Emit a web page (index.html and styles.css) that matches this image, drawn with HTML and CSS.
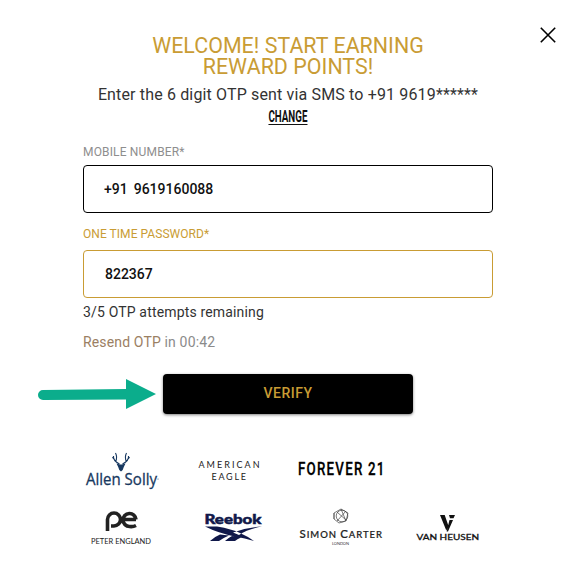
FILE: index.html
```html
<!DOCTYPE html>
<html lang="en">
<head>
<meta charset="utf-8">
<title>Verify OTP</title>
<link rel="stylesheet" href="styles.css">
</head>
<body>
<main class="dialog">
  <button class="close" aria-label="Close"><svg width="16" height="16" viewBox="0 0 16 16"><path d="M.8.8 15.2 15.2M15.2.8.8 15.2" stroke="#000" stroke-width="1.6" fill="none"/></svg></button>
  <h1 class="title">WELCOME! START EARNING<br>REWARD POINTS!</h1>
  <p class="subtitle">Enter the 6 digit OTP sent via SMS to +91 9619******</p>
  <a class="change">CHANGE</a>
  <form class="form">
    <label class="label">MOBILE NUMBER*</label>
    <div class="field"><span class="prefix">+91</span><span class="number">9619160088</span></div>
    <label class="label label-active">ONE TIME PASSWORD*</label>
    <div class="field field-active"><span class="otp">822367</span></div>
    <p class="attempts">3/5 OTP attempts remaining</p>
    <p class="resend"><span class="resend-link">Resend OTP</span> in 00:42</p>
  </form>
  <div class="action">
    <svg class="arrow" width="125" height="40" viewBox="34 374 125 40"><path d="M43 390 126 389V379L156 394 126 409V399.500L43 400A5 5 0 0 1 43 390Z" fill="#0bad8c"/></svg>
    <button class="verify">VERIFY</button>
  </div>
  <div class="brands">
    <svg viewBox="67 445 109 50">
      <g fill="none" stroke="#173860" stroke-width="1.1">
        <path d="M119.500 464C115.500 462 113 460 113.500 456M115.500 461.500C117 459 117 456 115.500 453M113.700 459 112.500 457M122.500 464C126.500 462 129 460 128.500 456M126.500 461.500C125 459 125 456 126.500 453M128.300 459 129.500 457"/>
      </g>
      <path d="M116.500 463.500 120 464.500H122L125.500 463.500 123.800 467 122.700 470 121 471.500 119.300 470 118.200 467Z" fill="#173860"/>
      <text x="86" y="485" textLength="71" lengthAdjust="spacingAndGlyphs" class="t-allen">Allen Solly</text>
      <circle cx="158" cy="479" r=".5" fill="#173860"/>
    </svg>
    <svg viewBox="176 445 109 50">
      <text x="198.500" y="467.500" textLength="61" class="t-eagle">AMERICAN</text>
      <text x="211.500" y="479.800" textLength="34.500" class="t-eagle">EAGLE</text>
    </svg>
    <svg viewBox="285 445 109 50">
      <text transform="translate(298 475) scale(.72 1)" textLength="120" class="t-forever">FOREVER 21</text>
    </svg>
    <span></span>
    <svg viewBox="67 503 109 50">
      <g fill="none" stroke="#222" stroke-width="3.600">
        <path d="M107.500 531V519.500A6.500 6.500 0 1 1 114 526H111M136 519.500H124.500M136 519.500A6.500 6.500 0 1 0 129.500 526.500Q133 527 136 525.500"/>
      </g>
      <text x="91" y="543.500" textLength="60" lengthAdjust="spacingAndGlyphs" class="t-peter">PETER ENGLAND</text>
    </svg>
    <svg viewBox="176 503 109 50">
      <text x="204.500" y="523.500" textLength="57" lengthAdjust="spacingAndGlyphs" class="t-reebok">Reebok</text>
      <path d="M205 526.500H217Q232 529 240 533Q247 536 254 541Q245 538 235 536.500Q218 533 205 526.500ZM262 526.500Q247 527 233 532.500L239 535Q248 529 262 526.500ZM220 534.500 229 535.500Q223 538 219 541H210Q214 537 220 534.500ZM232 536 241 537.500Q237 539 235 541H225Q228 538 232 536Z" fill="#10184a"/>
    </svg>
    <svg viewBox="285 503 109 50">
      <g fill="none" stroke="#444" stroke-width=".7"><circle cx="342" cy="516" r="5.800"/><path d="M334 513 341 509 348 513 346 521 339 523 334 519ZM337 512 346 520M346 511 337 521M334 513V519M341 509 346 521"/></g>
      <text x="299.500" y="538" textLength="82.500" class="t-simon"><tspan>S</tspan><tspan class="small">IMON </tspan><tspan>C</tspan><tspan class="small">ARTER</tspan></text>
      <text x="332" y="545.300" textLength="17" class="t-london">LONDON</text>
    </svg>
    <svg viewBox="394 503 109 50">
      <path d="M440 515H444.700L448.500 526 446.300 530.500ZM449 515H455L453.500 518.300H450ZM449.500 520H453L448 531.500H446.600Z" fill="#111"/>
      <text x="416.500" y="539.800" textLength="62.500" lengthAdjust="spacingAndGlyphs" class="t-heusen">VAN HEUSEN</text>
    </svg>
  </div>
</main>
</body>
</html>
```
FILE: styles.css
```css
* { box-sizing: border-box; }
body { margin: 0; background: #fff; font-family: Roboto, "Liberation Sans", sans-serif; color: #222; }
h1, p { margin: 0; }
button { border: 0; padding: 0; font: inherit; }
.dialog { position: relative; width: 577px; height: 561px; padding: 35px 84px 0 83px; display: flex; flex-direction: column; align-items: center; overflow: hidden; }
.close { position: absolute; left: 540px; top: 27px; width: 16px; height: 16px; background: none; }
.close svg { display: block; }
.title { font-size: 21.400px; line-height: 21px; font-weight: 400; color: #c99c34; text-align: center; letter-spacing: .03px; white-space: nowrap; }
.subtitle { margin-top: 8px; font-size: 16px; line-height: 20px; letter-spacing: .15px; color: #333; white-space: nowrap; }
.change { margin-top: 3px; height: 17px; font-size: 16px; line-height: 17px; font-weight: 700; color: #111; border-bottom: 1px solid #111; transform: scaleX(.61); }
.form { width: 410px; display: flex; flex-direction: column; }
.label { margin-top: 19px; font-size: 12px; line-height: 16px; letter-spacing: .16px; color: #8e8e8e; }
.label-active { margin-top: 13px; letter-spacing: .05px; color: #c99c34; }
.field { height: 48px; margin-top: 5px; padding-left: 20px; border: 1px solid #000; border-radius: 4px; display: flex; align-items: center; gap: 6px; font-size: 14px; font-weight: 500; color: #111; }
.field-active { margin-top: 8px; border-color: #c99c34; padding-left: 21px; }
.attempts { margin-top: 4px; font-size: 14px; line-height: 20px; letter-spacing: .16px; color: #333; }
.resend { margin-top: 10px; font-size: 14px; line-height: 20px; letter-spacing: .15px; color: #8b8b8b; }
.resend-link { color: #9b8063; }
.action { width: 509px; margin-top: 22px; display: flex; gap: 4px; align-self: flex-start; margin-left: -49px; }
.verify { width: 250px; height: 40px; padding-bottom: 2px; border-radius: 4px; background: #000; color: #c99c34; font-size: 14px; font-weight: 500; letter-spacing: .5px; box-shadow: 0 1px 3px rgba(0,0,0,.5); }
.brands { align-self: flex-start; margin: 31px 0 0 -16px; display: grid; grid-template-columns: repeat(4, 109px); row-gap: 8px; }
.brands svg { display: block; width: 109px; height: 50px; }
.t-allen { font: 15.500px "Open Sans", sans-serif; fill: #173860; stroke: #173860; stroke-width: .3px; }
.t-eagle { font: 9px Lato, sans-serif; fill: #222; }
.t-forever { font: 500 18.500px Roboto, sans-serif; fill: #000; stroke: #000; stroke-width: .3px; }
.t-peter { font: 7.500px Lato, sans-serif; fill: #222; }
.t-reebok { font: 900 13.500px Lato, sans-serif; fill: #10184a; stroke: #10184a; stroke-width: .5px; }
.t-simon { font: 500 11.500px Lato, sans-serif; fill: #222; stroke: #222; stroke-width: .2px; }
.small { font-size: 9.500px; }
.t-london { font: 4px Lato, sans-serif; fill: #333; }
.t-heusen { font: 8px Lato, sans-serif; fill: #111; stroke: #111; stroke-width: .3px; }
```
